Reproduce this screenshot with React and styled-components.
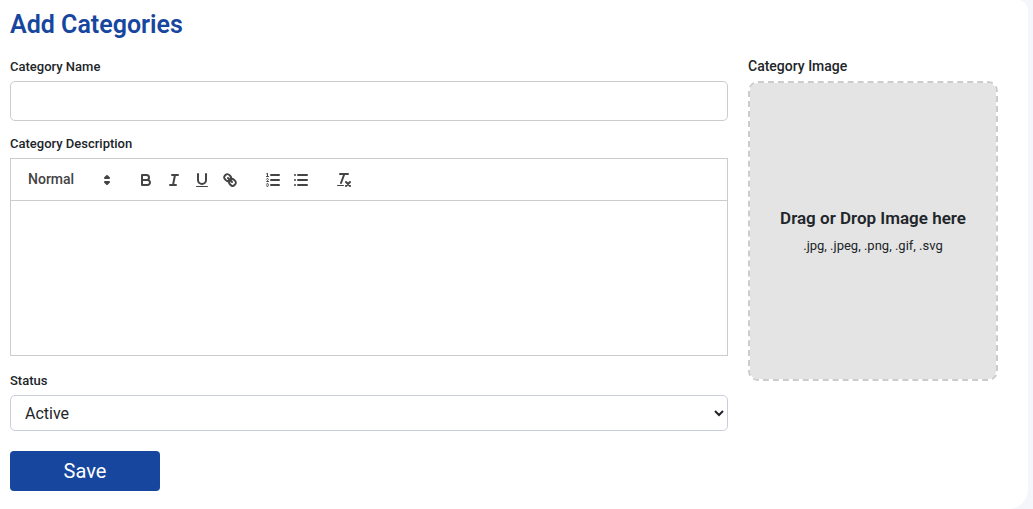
import React from 'react';
import styled, { createGlobalStyle } from 'styled-components';

const GlobalStyle = createGlobalStyle`
  * {
    box-sizing: border-box;
  }

  body {
    margin: 0;
    color: #212529;
    background-color: #F5F6FC;
    font-family: Roboto, "Liberation Sans", sans-serif;
  }
`;

const Card = styled.main`
  min-height: 100vh;
  margin-right: 5px;
  padding: 8px 30px 18px 10px;
  background-color: #FFF;
  border-radius: 0 10px 20px 0;
`;

const Title = styled.h1`
  margin: 0 0 16px;
  color: #17469E;
  font-size: 25px;
  font-weight: 600;
  line-height: 34px;
`;

const Form = styled.form`
  display: grid;
  grid-template-columns: minmax(0, 1fr) 250px;
  column-gap: 20px;
  align-items: start;
`;

const Column = styled.div`
  display: flex;
  flex-direction: column;
`;

const Label = styled.label`
  margin-bottom: 6px;
  font-size: ${props => (props.$large ? '14px' : '13px')};
  font-weight: 500;
  line-height: 17px;
`;

const NameInput = styled.input`
  width: 100%;
  height: 40px;
  margin-bottom: 14px;
  padding: 0 15px;
  border: 1px solid #CCC;
  border-radius: 5px;
  font: 400 16px Roboto, sans-serif;
`;

const Editor = styled.div`
  display: flex;
  flex-direction: column;
  margin-bottom: 16px;
  border: 1px solid #CCC;
`;

const Toolbar = styled.div`
  display: flex;
  gap: 15px;
  padding: 9px 8px 8px;
  border-bottom: 1px solid #CCC;
`;

const Group = styled.div`
  display: flex;
`;

const Picker = styled.div`
  display: flex;
  align-items: center;
  width: 98px;
  height: 24px;
  padding-right: 1px;
`;

const PickerSelect = styled.select`
  flex: 1;
  height: 24px;
  margin-right: -18px;
  padding: 0 20px 2px 9px;
  color: #444;
  background: transparent;
  border: 0;
  appearance: none;
  font: 500 14px Roboto, sans-serif;
`;

const ToolButton = styled.button`
  width: 28px;
  height: 24px;
  padding: 3px 5px;
  background: none;
  border: 0;
  cursor: pointer;
`;

const Svg = styled.svg`
  display: block;
  flex: none;
  width: 18px;
  height: 18px;
  fill: none;
  stroke: #444;
  stroke-width: 2;
  stroke-linecap: round;
  stroke-linejoin: round;
  pointer-events: none;

  .fill {
    fill: #444;
    stroke: none;
  }

  .thin {
    stroke-width: 1;
  }
`;

const EditorArea = styled.textarea`
  display: block;
  width: 100%;
  height: 154px;
  padding: 12px 15px;
  border: 0;
  resize: none;
  font: 400 13px Roboto, sans-serif;
`;

const StatusSelect = styled.select`
  width: 100%;
  height: 36px;
  margin-bottom: 20px;
  padding: 0 1px 0 10px;
  color: #212529;
  background-color: #FFF;
  border: 1px solid #C9CDDC;
  border-radius: 5px;
  font: 400 16px Roboto, sans-serif;
`;

const SaveButton = styled.button`
  width: 150px;
  height: 40px;
  color: #FFF;
  background-color: #17469E;
  border: 0;
  border-radius: 4px;
  font: 400 20px Roboto, sans-serif;
  cursor: pointer;
`;

const DropZone = styled.label`
  display: flex;
  flex-direction: column;
  align-items: center;
  justify-content: center;
  height: 300px;
  background-color: #E4E4E4;
  background-clip: padding-box;
  border: 2px dashed #CCC;
  border-radius: 10px;
  cursor: pointer;
`;

const DropTitle = styled.span`
  margin-bottom: 9px;
  font-size: 17px;
  font-weight: 600;
  line-height: 20px;
`;

const DropHint = styled.span`
  font-size: 13px;
  line-height: 18px;
`;

const ICONS = {
  Bold: (
    <>
      <path d="M5,4H9.5A2.5,2.5,0,0,1,12,6.5v0A2.5,2.5,0,0,1,9.5,9H5V4Z" />
      <path d="M5,9h5.5A2.5,2.5,0,0,1,13,11.5v0A2.5,2.5,0,0,1,10.5,14H5V9Z" />
    </>
  ),
  Italic: <path d="M7,4H13M5,14H11M8,14L10,4" />,
  Underline: (
    <>
      <path d="M5,3V9a4.012,4.012,0,0,0,4,4H9a4.012,4.012,0,0,0,4-4V3" />
      <rect className="fill" x="3" y="15" width="12" height="1" rx="0.5" />
    </>
  ),
  Link: (
    <>
      <path d="M7,7L11,11" />
      <path d="M8.9,4.577a3.476,3.476,0,0,1,.36,4.679A3.476,3.476,0,0,1,4.577,8.9C3.185,7.5,2.035,6.4,4.217,4.217S7.5,3.185,8.9,4.577Z" />
      <path d="M13.423,9.1a3.476,3.476,0,0,0-4.679-.36,3.476,3.476,0,0,0,.36,4.679c1.392,1.392,2.5,2.542,4.679.36S14.815,10.5,13.423,9.1Z" />
    </>
  ),
  'Numbered list': (
    <>
      <path d="M7,4H15M7,9H15M7,14H15" />
      <path className="thin" d="M2.5,5.5H4.5" />
      <path className="fill" d="M3.5,6A0.5,0.5,0,0,1,3,5.5V3.085l-0.276.138A0.5,0.5,0,0,1,2.053,3c-0.124-.247-0.023-0.324.224-0.447l1-.5A0.5,0.5,0,0,1,4,2.5v3A0.5,0.5,0,0,1,3.5,6Z" />
      <path className="thin" d="M4.5,10.5h-2c0-.234,1.85-1.076,1.85-2.234A0.959,0.959,0,0,0,2.5,8.156" />
      <path className="thin" d="M2.5,14.846a0.959,0.959,0,0,0,1.85-.109A0.7,0.7,0,0,0,3.75,14a0.688,0.688,0,0,0,.6-0.736,0.959,0.959,0,0,0-1.85-.109" />
    </>
  ),
  'Bulleted list': <path d="M6,4H15M6,9H15M6,14H15M3,4H3M3,9H3M3,14H3" />,
  'Clear formatting': (
    <>
      <path d="M5,3H13M6,12L9.35,3M11,11L15,15M15,11L11,15" />
      <rect className="fill" x="2" y="14" width="7" height="1" rx="0.5" />
    </>
  ),
};

const GROUPS = [
  ['Bold', 'Italic', 'Underline', 'Link'],
  ['Numbered list', 'Bulleted list'],
  ['Clear formatting'],
];

const EditorToolbar = () => (
  <Toolbar>
    <Picker>
      <PickerSelect aria-label="Text style" defaultValue="Normal">
        <option>Normal</option>
        <option>Heading 1</option>
        <option>Heading 2</option>
      </PickerSelect>
      <Svg viewBox="0 0 18 18">
        <path d="M7,11L9,13L11,11ZM7,7L9,5L11,7Z" />
      </Svg>
    </Picker>
    {
      GROUPS.map(group => (
        <Group key={group[0]}>
          {
            group.map(name => (
              <ToolButton key={name} type="button" aria-label={name}>
                <Svg viewBox="0 0 18 18">{ICONS[name]}</Svg>
              </ToolButton>
            ))
          }
        </Group>
      ))
    }
  </Toolbar>
);

const App = () => (
  <>
    <GlobalStyle />
    <Card>
      <Title>Add Categories</Title>
      <Form onSubmit={e => e.preventDefault()}>
        <Column>
          <Label htmlFor="name">Category Name</Label>
          <NameInput id="name" type="text" />
          <Label htmlFor="description">Category Description</Label>
          <Editor>
            <EditorToolbar />
            <EditorArea id="description" />
          </Editor>
          <Label htmlFor="status">Status</Label>
          <StatusSelect id="status" defaultValue="Active">
            <option>Active</option>
            <option>Inactive</option>
          </StatusSelect>
          <SaveButton type="submit">Save</SaveButton>
        </Column>
        <Column>
          <Label $large htmlFor="image">Category Image</Label>
          <DropZone>
            <DropTitle>Drag or Drop Image here</DropTitle>
            <DropHint>.jpg, .jpeg, .png, .gif, .svg</DropHint>
            <input id="image" type="file" accept="image/*" hidden />
          </DropZone>
        </Column>
      </Form>
    </Card>
  </>
);

export default App;
